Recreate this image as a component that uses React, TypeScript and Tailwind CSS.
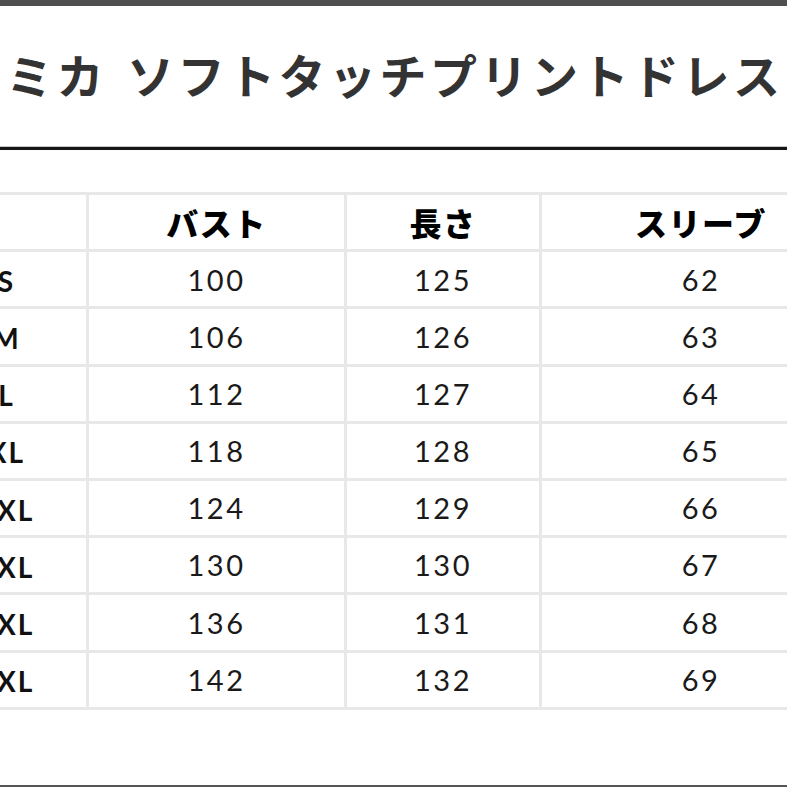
import React from 'react';

const rows: [string, string, string, string][] = [
  ['S', '100', '125', '62'],
  ['M', '106', '126', '63'],
  ['L', '112', '127', '64'],
  ['XL', '118', '128', '65'],
  ['2XL', '124', '129', '66'],
  ['3XL', '130', '130', '67'],
  ['4XL', '136', '131', '68'],
  ['5XL', '142', '132', '69'],
];

const headers = ['', 'バスト', '長さ', 'スリーブ'];

const jp = { fontFamily: '"Noto Sans CJK JP", "Noto Sans", sans-serif' };
const num = { fontFamily: 'Lato, "Noto Sans", sans-serif' };

export default function App() {
  return (
    <div className="w-[787px] h-[787px] overflow-hidden bg-white flex flex-col">
      <div className="h-[6px] bg-[#4f4f4f] shrink-0" />

      {/* title */}
      <div
        className="h-[140px] shrink-0 flex items-center pl-[6px] pb-[4px] whitespace-nowrap text-[47px] font-bold tracking-[3.5px] text-[#333]"
        style={jp}
      >
        ミカ<span className="inline-block w-[20px]" />ソフトタッチプリントドレス
      </div>

      <div className="h-px bg-[#c8c8c8] shrink-0" />
      <div className="h-[3px] bg-[#151515] shrink-0" />

      <div className="h-[42px] shrink-0" />

      {/* size table */}
      <div className="ml-[-76px] w-max grid grid-cols-[159px_255px_192px_318px] gap-[3px] p-[3px] bg-[#e8e8e8] shrink-0">
        {headers.map((h, i) => (
          <div
            key={i}
            className="h-[54.2px] bg-white flex items-center justify-center text-[32px] font-black tracking-[1.5px] text-black"
            style={jp}
          >
            {h}
          </div>
        ))}
        {rows.map((r) => (
          <React.Fragment key={r[0]}>
            <div
              className="h-[54.2px] bg-white flex items-center justify-center pt-[3px] text-[28px] font-bold tracking-[2px] text-[#111]"
              style={num}
            >
              {r[0]}
            </div>
            {r.slice(1).map((v, j) => (
              <div
                key={j}
                className="h-[54.2px] bg-white flex items-center justify-center text-[29px] tracking-[2.5px] text-[#1a1a1a]"
                style={num}
              >
                {v}
              </div>
            ))}
          </React.Fragment>
        ))}
      </div>

      <div className="flex-1" />
      <div className="h-[2px] bg-[#555] shrink-0" />
    </div>
  );
}
